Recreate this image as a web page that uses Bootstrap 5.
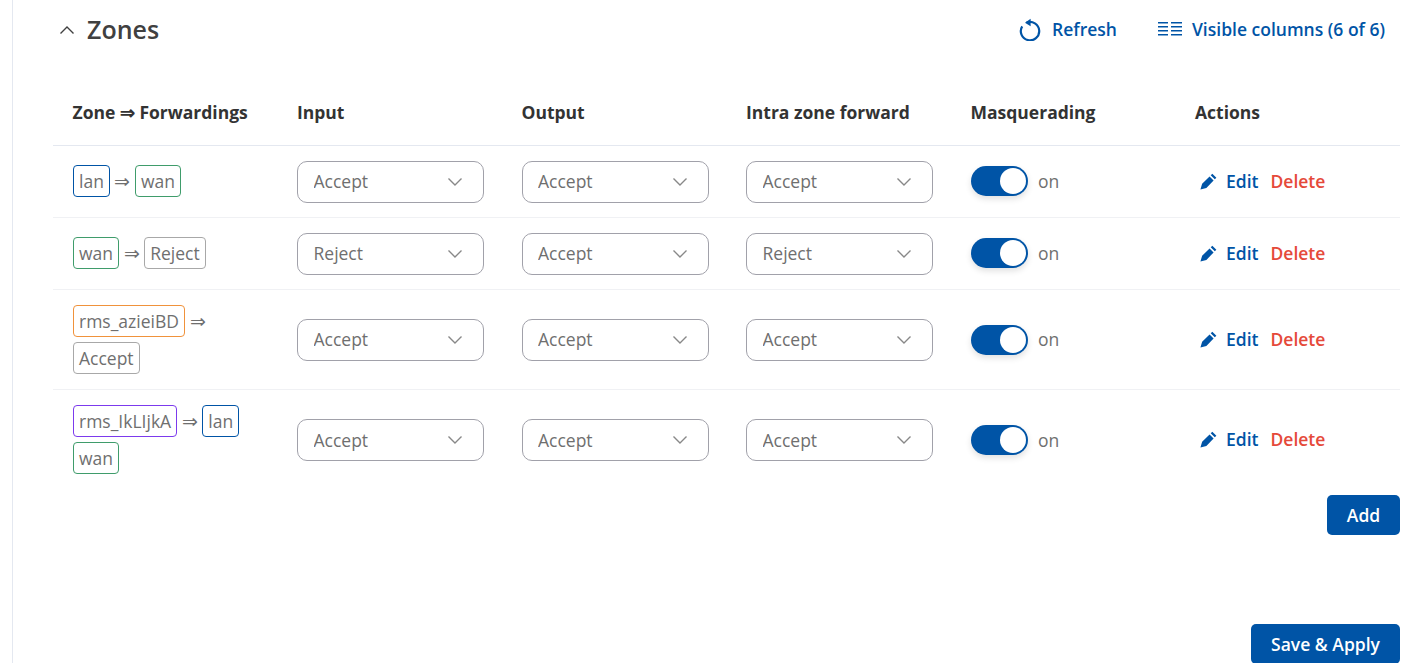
<!DOCTYPE html>
<html lang="en">
<head>
<meta charset="utf-8">
<title>Zones</title>
<link href="https://cdn.jsdelivr.net/npm/bootstrap@5.3.0/dist/css/bootstrap.min.css" rel="stylesheet">
<style>
html,body{height:663px;overflow:hidden;background:#fff}
body{font-family:"Open Sans","Noto Sans",sans-serif;font-size:17.5px;color:#6f6f6f}
.page-shell{margin-left:12px;border-left:1px solid #e4e8f0;height:663px;padding:0 12px 0 40px}
.zone-head{height:60px}
.zone-title{font-size:25px;font-weight:600;color:#404040;line-height:58px;height:60px;margin:0}
.chev-btn{width:16px;height:10px;margin:0 12px 0 6px;color:#404040}
.tool-link{color:#0054a6;font-weight:600;text-decoration:none;font-size:17.5px;gap:10px}
.tool-gap{gap:41px;padding-right:15px;margin-top:-2px}
.zone-table{table-layout:fixed;width:1347px;margin:21px 0 0;color:#6f6f6f}
.zone-table th:not(:last-child){width:224.5px}
.zone-table th{font-weight:700;color:#333;height:64px;padding:0 0 2px 19.5px;vertical-align:middle;border-bottom:1px solid #e4e8f0;white-space:nowrap;font-size:17.5px}
.zone-table td{padding:0 20px 0 19.5px;vertical-align:middle;border-bottom:1px solid #f0f1f4;color:#6f6f6f;font-size:17.5px}
.zone-table tr:last-child td{border-bottom:0}
.h72{height:72px}.h100{height:100px}
.zbox{display:inline-block;border:1px solid #999;border-radius:4px;padding:0 5px;line-height:30px;height:32px;margin:0;color:#6f6f6f}
.zarrow{font-size:19px}
.zline{line-height:37px;margin-top:1px;padding-left:.5px}
.zb-lan{border-color:#0054a6}.zb-wan{border-color:#3f9c6b}.zb-rej{border-color:#a8a8a8}.zb-org{border-color:#f0923b}.zb-pur{border-color:#7c3aed}
.zsel.form-select{width:187px;height:42px;margin-top:1px;border-radius:10px;border-color:#a1a1aa;color:#6f6f6f;font-size:17.5px;padding:0 36px 0 15.5px;background-size:16px 10px;background-position:right 20px center;
background-image:url("data:image/svg+xml,%3csvg xmlns='http://www.w3.org/2000/svg' viewBox='0 0 16 10'%3e%3cpath fill='none' stroke='%23888' stroke-width='1.4' d='M1.5 1.5 8 8l6.5-6.5'/%3e%3c/svg%3e")}
.sw-row{gap:10px;height:30px;padding-left:.5px}
.h100 .sw-row{margin-top:1px}
.sw-track{width:57px;height:30px;background:#0054a6;border-radius:15px;position:relative;box-shadow:0 3px 6px rgba(0,0,0,.12)}
.sw-knob{position:absolute;right:2px;top:2px;width:26px;height:26px;background:#fff;border-radius:50%}
.act-link{font-weight:600;text-decoration:none}
.act-edit{color:#0054a6;margin-left:5px}
.act-del{color:#e5493a;margin-left:12px}
.pen{width:17px;height:17px;margin-right:9px;color:#0054a6}
.zbtn{background:#0054a6;border:0;border-radius:5px;color:#fff;font-weight:600;font-size:17.5px;height:40px}
.zbtn:hover{background:#0054a6;color:#fff}
.w-add{width:73px}.w-save{width:149px}
.add-row{margin-top:6px}
.save-row{margin-top:89px}
</style>
</head>
<body>
<div class="page-shell">
  <div class="zone-head d-flex align-items-center justify-content-between">
    <div class="d-flex align-items-center">
      <svg class="chev-btn" viewBox="0 0 16 10"><path fill="none" stroke="currentColor" stroke-width="1.4" d="M1.5 8.5 8 2l6.5 6.5"/></svg>
      <h2 class="zone-title">Zones</h2>
    </div>
    <div class="d-flex align-items-center tool-gap">
      <a href="#" class="tool-link d-flex align-items-center">
        <svg width="24" height="24" viewBox="0 0 24 24"><path fill="none" stroke="currentColor" stroke-width="2.2" d="M8.6 5.6A9.2 9.2 0 1 1 4.2 9.3"/><path fill="currentColor" d="M12.6 1.8v7.4L7 5.7z"/></svg>
        Refresh</a>
      <a href="#" class="tool-link d-flex align-items-center">
        <svg width="24" height="16" viewBox="0 0 24 16" fill="currentColor"><path d="M0 1h10v1.4H0zM0 5h10v1.4H0zM0 9h10v1.4H0zM0 13h10v1.4H0zM13 1h11v1.4H13zM13 5h11v1.4H13zM13 9h11v1.4H13zM13 13h11v1.4H13z"/></svg>
        Visible columns (6 of 6)</a>
    </div>
  </div>

  <table class="table table-borderless zone-table mb-0">
    <thead>
      <tr><th>Zone ⇒ Forwardings</th><th>Input</th><th>Output</th><th>Intra zone forward</th><th>Masquerading</th><th>Actions</th></tr>
    </thead>
    <tbody>
      <tr class="h72">
        <td><div class="zline"><span class="zbox zb-lan">lan</span> <span class="zarrow">⇒</span> <span class="zbox zb-wan">wan</span></div></td>
        <td><select class="form-select zsel"><option>Accept</option></select></td>
        <td><select class="form-select zsel"><option>Accept</option></select></td>
        <td><select class="form-select zsel"><option>Accept</option></select></td>
        <td><div class="d-flex align-items-center sw-row"><span class="sw-track"><span class="sw-knob"></span></span><span>on</span></div></td>
        <td><div class="d-flex align-items-center"><a href="#" class="act-link act-edit d-flex align-items-center"><svg class="pen" viewBox="0 0 16 16"><path fill="currentColor" d="M11.6.6 15.4 4.4 13.9 5.9 10.1 2.1zM9 3.2 12.8 7 6 14 .4 15.6 2 10z"/></svg>Edit</a><a href="#" class="act-link act-del">Delete</a></div></td>
      </tr>
      <tr class="h72">
        <td><div class="zline"><span class="zbox zb-wan">wan</span> <span class="zarrow">⇒</span> <span class="zbox zb-rej">Reject</span></div></td>
        <td><select class="form-select zsel"><option>Reject</option></select></td>
        <td><select class="form-select zsel"><option>Accept</option></select></td>
        <td><select class="form-select zsel"><option>Reject</option></select></td>
        <td><div class="d-flex align-items-center sw-row"><span class="sw-track"><span class="sw-knob"></span></span><span>on</span></div></td>
        <td><div class="d-flex align-items-center"><a href="#" class="act-link act-edit d-flex align-items-center"><svg class="pen" viewBox="0 0 16 16"><path fill="currentColor" d="M11.6.6 15.4 4.4 13.9 5.9 10.1 2.1zM9 3.2 12.8 7 6 14 .4 15.6 2 10z"/></svg>Edit</a><a href="#" class="act-link act-del">Delete</a></div></td>
      </tr>
      <tr class="h100">
        <td><div class="zline"><span class="zbox zb-org">rms_azieiBD</span> <span class="zarrow">⇒</span> <span class="zbox zb-rej">Accept</span></div></td>
        <td><select class="form-select zsel"><option>Accept</option></select></td>
        <td><select class="form-select zsel"><option>Accept</option></select></td>
        <td><select class="form-select zsel"><option>Accept</option></select></td>
        <td><div class="d-flex align-items-center sw-row"><span class="sw-track"><span class="sw-knob"></span></span><span>on</span></div></td>
        <td><div class="d-flex align-items-center"><a href="#" class="act-link act-edit d-flex align-items-center"><svg class="pen" viewBox="0 0 16 16"><path fill="currentColor" d="M11.6.6 15.4 4.4 13.9 5.9 10.1 2.1zM9 3.2 12.8 7 6 14 .4 15.6 2 10z"/></svg>Edit</a><a href="#" class="act-link act-del">Delete</a></div></td>
      </tr>
      <tr class="h100">
        <td><div class="zline"><span class="zbox zb-pur">rms_IkLIjkA</span> <span class="zarrow">⇒</span> <span class="zbox zb-lan">lan</span> <span class="zbox zb-wan">wan</span></div></td>
        <td><select class="form-select zsel"><option>Accept</option></select></td>
        <td><select class="form-select zsel"><option>Accept</option></select></td>
        <td><select class="form-select zsel"><option>Accept</option></select></td>
        <td><div class="d-flex align-items-center sw-row"><span class="sw-track"><span class="sw-knob"></span></span><span>on</span></div></td>
        <td><div class="d-flex align-items-center"><a href="#" class="act-link act-edit d-flex align-items-center"><svg class="pen" viewBox="0 0 16 16"><path fill="currentColor" d="M11.6.6 15.4 4.4 13.9 5.9 10.1 2.1zM9 3.2 12.8 7 6 14 .4 15.6 2 10z"/></svg>Edit</a><a href="#" class="act-link act-del">Delete</a></div></td>
      </tr>
    </tbody>
  </table>
  <div class="d-flex justify-content-end add-row"><button class="btn zbtn w-add p-0">Add</button></div>
  <div class="d-flex justify-content-end save-row"><button class="btn zbtn w-save p-0">Save &amp; Apply</button></div>
</div>
<script src="https://cdn.jsdelivr.net/npm/bootstrap@5.3.0/dist/js/bootstrap.bundle.min.js"></script>
</body>
</html>
